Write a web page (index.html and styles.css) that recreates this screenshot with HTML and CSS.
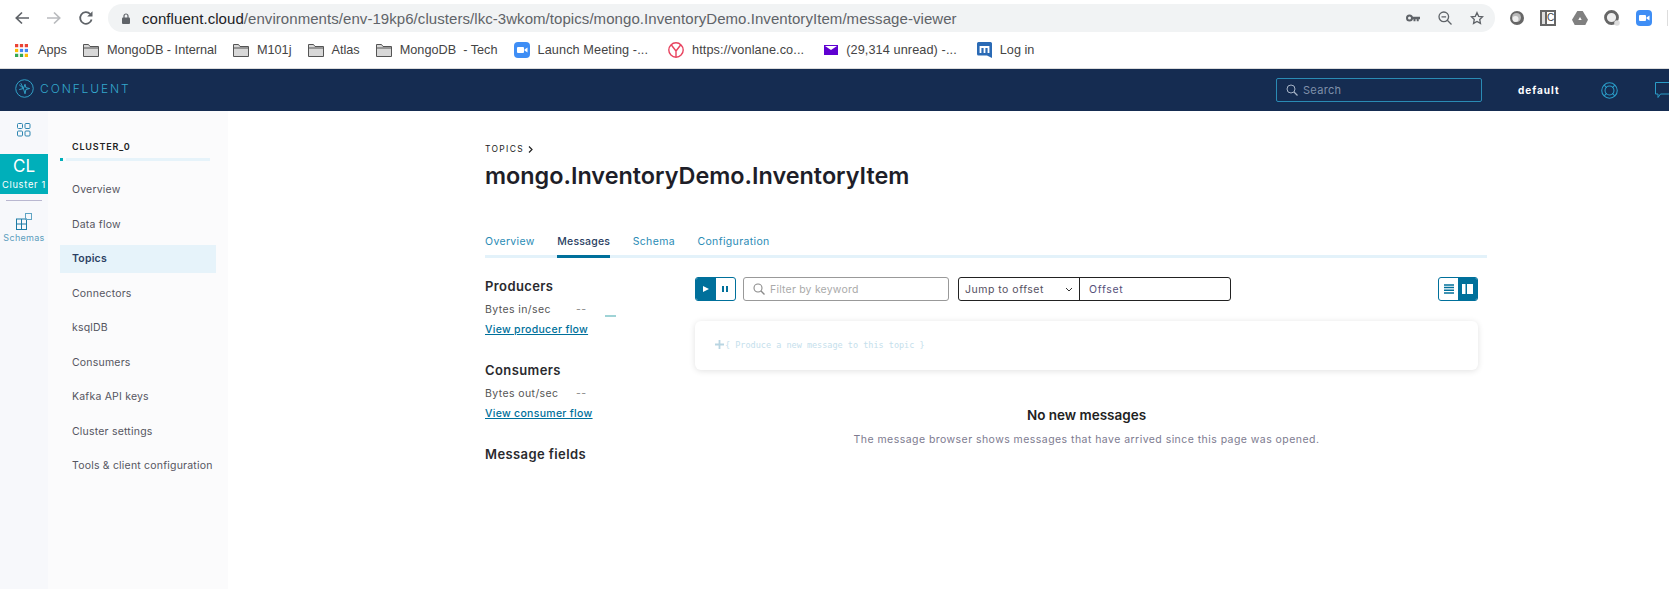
FILE: index.html
```html
<!DOCTYPE html>
<html lang="en">
<head>
  <meta charset="UTF-8" />
  <title>mongo.InventoryDemo.InventoryItem - Confluent</title>
  <link rel="stylesheet" href="styles.css">
</head>
<body>

  <!-- browser toolbar -->
  <div class="toolbar">
    <svg class="tool" width="16" height="16" viewBox="0 0 16 16"><path d="M15 8H2.500M8 2.500L2.300 8 8 13.500" fill="none" stroke="#5f6368" stroke-width="1.700"/></svg>
    <svg class="tool" width="16" height="16" viewBox="0 0 16 16"><path d="M1 8h12.500M8 2.500L13.700 8 8 13.500" fill="none" stroke="#b9bbbe" stroke-width="1.700"/></svg>
    <svg class="tool" width="16" height="16" viewBox="0 0 16 16"><path d="M13.600 9.500A5.800 5.800 0 1 1 12.200 4" fill="none" stroke="#5f6368" stroke-width="1.800"/><path d="M14.500 1.200v5.300H9.200z" fill="#5f6368"/></svg>
    <div class="urlbar">
      <svg class="lock" width="8" height="11" viewBox="0 0 8 11"><path d="M2 5V3a2 2 0 0 1 4 0v2" fill="none" stroke="#5f6368" stroke-width="1.200"/><rect y="4.500" width="8" height="6.500" rx="1" fill="#5f6368"/></svg>
      <div class="url"><b>confluent.cloud</b>/environments/env-19kp6/clusters/lkc-3wkom/topics/mongo.InventoryDemo.InventoryItem/message-viewer</div>
      <svg class="url-icon" width="14" height="9" viewBox="0 0 14 9"><circle cx="3.500" cy="4" r="2.500" fill="none" stroke="#5f6368" stroke-width="2"/><path d="M5.500 2.800H14v2.400h-1.300v2h-2v-2H9.500v2h-2v-2h-2z" fill="#5f6368"/></svg>
      <svg class="url-icon" width="14" height="14" viewBox="0 0 14 14"><circle cx="5.800" cy="5.800" r="4.800" fill="none" stroke="#5f6368" stroke-width="1.300"/><path d="M9.300 9.300L13.500 13.500M3.500 5.800h4.600" fill="none" stroke="#5f6368" stroke-width="1.300"/></svg>
      <svg class="url-icon" width="14" height="14" viewBox="0 0 15 14"><path d="M7.500 1.300l1.800 3.900 4.200.5-3.100 2.900.8 4.200-3.700-2.100-3.700 2.100.8-4.200L1.500 5.700l4.200-.5z" fill="none" stroke="#5f6368" stroke-width="1.400"/></svg>
    </div>
    <div class="extensions">
      <svg width="14" height="14" viewBox="0 0 14 14"><circle cx="7" cy="7" r="7" fill="#666"/><circle cx="6.500" cy="6.500" r="4.500" fill="#bbb"/><circle cx="5.500" cy="8" r="3" fill="#eee"/></svg>
      <div class="ext-box"><span class="ext-strip"></span><span class="ext-c">C</span></div>
      <svg width="16" height="14" viewBox="0 0 16 14"><path d="M5.300 0h5.400L16 8.800 13.300 14H2.700L0 8.800z" fill="#808080"/><path d="M8 6l1.700 3H6.300z" fill="#fff"/></svg>
      <svg width="16" height="16" viewBox="0 0 16 16"><circle cx="7.500" cy="7.500" r="6" fill="#eee" stroke="#666" stroke-width="2.800"/><circle cx="13" cy="13" r="2.800" fill="#ddd"/></svg>
      <svg width="16" height="16" viewBox="0 0 16 16"><rect width="16" height="16" rx="4" fill="#3f8ef5"/><rect x="3" y="5" width="7" height="6" rx="1" fill="#fff"/><path d="M10.500 7.500l3-2v5l-3-2z" fill="#fff"/></svg>
      <span class="ext-sep"></span>
    </div>
  </div>

  <!-- bookmarks -->
  <div class="bookmarks">
    <div class="bookmark">
      <svg class="apps-icon" width="13" height="13" viewBox="0 0 12 12">
        <rect width="3" height="3" fill="#ea4335"/><rect x="4.500" width="3" height="3" fill="#ea4335"/><rect x="9" width="3" height="3" fill="#ea4335"/>
        <rect y="4.500" width="3" height="3" fill="#fbbc05"/><rect x="4.500" y="4.500" width="3" height="3" fill="#4285f4"/><rect x="9" y="4.500" width="3" height="3" fill="#4285f4"/>
        <rect y="9" width="3" height="3" fill="#34a853"/><rect x="4.500" y="9" width="3" height="3" fill="#34a853"/><rect x="9" y="9" width="3" height="3" fill="#fbbc05"/>
      </svg>
      Apps
    </div>
    <div class="bookmark">
      <svg width="16" height="13" viewBox="0 0 16 13"><path d="M.5 12.500V.5h5l1.500 2h8.500v10z" fill="#d8d8d8" stroke="#555"/><path d="M.5 4h15" stroke="#555"/></svg>
      MongoDB - Internal
    </div>
    <div class="bookmark">
      <svg width="16" height="13" viewBox="0 0 16 13"><path d="M.5 12.500V.5h5l1.500 2h8.500v10z" fill="#d8d8d8" stroke="#555"/><path d="M.5 4h15" stroke="#555"/></svg>
      M101j
    </div>
    <div class="bookmark">
      <svg width="16" height="13" viewBox="0 0 16 13"><path d="M.5 12.500V.5h5l1.500 2h8.500v10z" fill="#d8d8d8" stroke="#555"/><path d="M.5 4h15" stroke="#555"/></svg>
      Atlas
    </div>
    <div class="bookmark">
      <svg width="16" height="13" viewBox="0 0 16 13"><path d="M.5 12.500V.5h5l1.500 2h8.500v10z" fill="#d8d8d8" stroke="#555"/><path d="M.5 4h15" stroke="#555"/></svg>
      MongoDB&nbsp; - Tech
    </div>
    <div class="bookmark trunc">
      <svg width="16" height="16" viewBox="0 0 16 16"><rect width="16" height="16" rx="4" fill="#3f8ef5"/><rect x="3" y="5" width="7" height="6" rx="1" fill="#fff"/><path d="M10.500 7.500l3-2v5l-3-2z" fill="#fff"/></svg>
      Launch Meeting -...
    </div>
    <div class="bookmark trunc">
      <svg width="16" height="16" viewBox="0 0 16 16"><circle cx="8" cy="8" r="7.200" fill="none" stroke="#e8435f" stroke-width="1.400"/><path d="M3.200 2.800L8 9l4.800-6.200M8 9v6" fill="none" stroke="#e8435f" stroke-width="1.400"/></svg>
      https://vonlane.co...
    </div>
    <div class="bookmark trunc">
      <svg width="14" height="10" viewBox="0 0 14 10"><rect width="14" height="10" fill="#5f01d1"/><path d="M1 1h12L7 5z" fill="#fff"/></svg>
      (29,314 unread) -...
    </div>
    <div class="bookmark">
      <svg width="15" height="16" viewBox="0 0 15 16"><path d="M1.500 0h12A1.500 1.500 0 0 1 15 1.500V16l-5-2.500H1.500A1.500 1.500 0 0 1 0 12V1.500A1.500 1.500 0 0 1 1.500 0z" fill="#2a6ab5"/><path d="M3.500 11V5h8v6M7.500 5v6" fill="none" stroke="#fff" stroke-width="1.800"/></svg>
      Log in
    </div>
  </div>

  <!-- confluent top nav -->
  <div class="topnav">
    <div class="logo">
      <svg width="19" height="19" viewBox="0 0 18 18"><circle cx="9" cy="9" r="8.300" fill="none" stroke="#33a7cc" stroke-width=".9"/><path d="M4 5.500l4 3.500-2.500-5M8 9L4 10M8 9l1.500 5 .8-4 3.500-1-3.500-.8L9.500 5z" fill="none" stroke="#33a7cc" stroke-width=".9"/></svg>
      CONFLUENT
    </div>
    <div class="nav-right">
      <div class="search">
        <svg width="12" height="12" viewBox="0 0 12 12"><circle cx="5" cy="5" r="4" fill="none" stroke="#a6b3c6" stroke-width="1"/><path d="M8 8l3.500 3.500" stroke="#a6b3c6" stroke-width="1.200"/></svg>
        Search
      </div>
      <div class="env">default</div>
      <svg class="help" width="17" height="17" viewBox="0 0 16 16"><circle cx="8" cy="8" r="7.300" fill="none" stroke="#2a9cc7"/><circle cx="8" cy="8" r="4.200" fill="none" stroke="#2a9cc7"/><path d="M3 3l2.500 2.500M13 3l-2.500 2.500M3 13l2.500-2.500M13 13l-2.500-2.500" stroke="#2a9cc7"/></svg>
      <svg class="chat" width="20" height="16" viewBox="0 0 20 16"><path d="M.5.500h19v11.500H5.500L3 15.500V12H.5z" fill="none" stroke="#2a9cc7"/></svg>
    </div>
  </div>

  <div class="app">
    <div class="rail">
      <svg class="rail-grid" width="14" height="14" viewBox="0 0 14 14" fill="none" stroke="#2f86b0"><rect x=".5" y=".5" width="5" height="5" rx="1"/><rect x="8" y=".5" width="5" height="5" rx="1"/><rect x=".5" y="8" width="5" height="5" rx="1"/><rect x="8" y="8" width="5" height="5" rx="1"/></svg>
      <div class="cluster-tile">
        <div class="cluster-short">CL</div>
        <div class="cluster-name">Cluster 1</div>
      </div>
      <div class="rail-sep"></div>
      <svg class="rail-schema" width="16" height="17" viewBox="0 0 16 17" fill="none" stroke="#1c7ba5"><rect x=".5" y="6" width="10" height="10.500"/><path d="M5.500 6v10.500M.5 11h10"/><rect x="9.500" y=".5" width="6" height="6" stroke="#5fa4c4"/></svg>
      <div class="rail-label">Schemas</div>
    </div>

    <div class="subnav">
      <div class="subnav-title">CLUSTER_0</div>
      <div class="subnav-rule"><span class="rule-dot"></span><span class="rule-line"></span></div>
      <ul class="subnav-list">
        <li>Overview</li>
        <li>Data flow</li>
        <li class="active">Topics</li>
        <li>Connectors</li>
        <li>ksqlDB</li>
        <li>Consumers</li>
        <li>Kafka API keys</li>
        <li>Cluster settings</li>
        <li>Tools &amp; client configuration</li>
      </ul>
    </div>

    <div class="content">
      <div class="crumb">TOPICS <span class="crumb-arrow">
        <svg width="5" height="7" viewBox="0 0 5 7"><path d="M1 .5l3 3-3 3" fill="none" stroke="#222" stroke-width="1.200"/></svg>
      </span></div>
      <h1>mongo.InventoryDemo.InventoryItem</h1>

      <div class="tabs">
        <div class="tab">Overview</div>
        <div class="tab selected">Messages</div>
        <div class="tab">Schema</div>
        <div class="tab">Configuration</div>
      </div>

      <div class="columns">
        <div class="stats">
          <h3>Producers</h3>
          <div class="stat"><span class="stat-label">Bytes in/sec</span><span class="stat-val">--</span><span class="spark"></span></div>
          <a class="flow">View producer flow</a>
          <h3>Consumers</h3>
          <div class="stat"><span class="stat-label">Bytes out/sec</span><span class="stat-val">--</span></div>
          <a class="flow">View consumer flow</a>
          <h3>Message fields</h3>
        </div>

        <div class="viewer">
          <div class="controls">
            <div class="playpause">
              <div class="pp-btn on"><svg width="8" height="8" viewBox="0 0 8 8"><path d="M1 1l6 3-6 3z" fill="#fff"/></svg></div>
              <div class="pp-btn"><svg width="8" height="8" viewBox="0 0 8 8"><path d="M1 1h2v6H1zM5 1h2v6H5z" fill="#00709b"/></svg></div>
            </div>
            <div class="filter">
              <svg width="12" height="12" viewBox="0 0 12 12"><circle cx="5" cy="5" r="4" fill="none" stroke="#8a8a8a" stroke-width="1.100"/><path d="M8 8l3.500 3.500" stroke="#8a8a8a" stroke-width="1.300"/></svg>
              Filter by keyword
            </div>
            <div class="jump">
              <div class="jump-select">Jump to offset
                <svg width="8" height="5" viewBox="0 0 8 5"><path d="M1 1l3 3 3-3" fill="none" stroke="#333"/></svg>
              </div>
              <div class="jump-input">Offset</div>
            </div>
            <div class="layout-toggle">
              <div class="lt-btn"><svg width="10" height="10" viewBox="0 0 10 10"><path d="M0 1h10M0 3.600h10M0 6.300h10M0 9h10" stroke="#00709b" stroke-width="1.500"/></svg></div>
              <div class="lt-btn on"><svg width="11" height="10" viewBox="0 0 11 10"><path d="M0 0h3.500v10H0zM5 0h6v10H5z" fill="#fff"/></svg></div>
            </div>
          </div>

          <div class="produce">
            <svg width="11" height="11" viewBox="0 0 11 11"><path d="M5.500 1v9M1 5.500h9" stroke="#b9d5e2" stroke-width="1.800"/></svg>
            <span>{ Produce a new message to this topic }</span>
          </div>

          <div class="empty">
            <div class="empty-title">No new messages</div>
            <div class="empty-text">The message browser shows messages that have arrived since this page was opened.</div>
          </div>
        </div>
      </div>
    </div>
  </div>

</body>
</html>
```

FILE: styles.css
```css
* {
  box-sizing: border-box;
}

html, body {
  margin: 0;
  height: 589px;
  overflow: hidden;
  background-color: white;
}

body {
  font-family: 'Inter', sans-serif;
  color: #222;
}

svg {
  flex: none;
  display: block;
}

/* browser chrome */
.toolbar {
  display: flex;
  align-items: center;
  height: 36px;
  padding: 4px 0 4px 14px;
}

.tool {
  margin-right: 16px;
}

.urlbar {
  display: flex;
  align-items: center;
  flex: none;
  width: 1387px;
  height: 28px;
  margin-left: -2px;
  padding: 0 11px 0 14px;
  border-radius: 14px;
  background-color: #f1f3f4;
}

.lock {
  margin-right: 12px;
}

.url {
  flex: 1;
  font-family: 'Liberation Sans', sans-serif;
  font-size: 15px;
  letter-spacing: .06px;
  white-space: nowrap;
  color: #5f6368;
}

.url b {
  font-weight: normal;
  color: #202124;
}

.url-icon {
  margin-left: 18px;
}

.extensions {
  display: flex;
  align-items: center;
  gap: 16px;
  margin-left: 15px;
}

.ext-box {
  display: flex;
  align-items: center;
  gap: 2px;
  width: 16px;
  height: 16px;
  padding: 2px;
  background-color: #666;
}

.ext-strip {
  width: 3px;
  height: 12px;
  background-color: #ddd;
}

.ext-c {
  width: 7px;
  height: 12px;
  background-color: white;
  color: #444;
  font-family: 'Liberation Sans', sans-serif;
  font-size: 10px;
  line-height: 12px;
  text-align: center;
}

.ext-sep {
  width: 1px;
  height: 16px;
  margin-left: -1px;
  background-color: #ddd;
}

.bookmarks {
  display: flex;
  align-items: center;
  gap: 16px;
  height: 33px;
  padding: 0 0 4px 15px;
  border-bottom: 1px solid #dcdcdc;
  font-family: 'Liberation Sans', sans-serif;
  font-size: 12.700px;
  color: #444;
}

.bookmark {
  display: flex;
  align-items: center;
  gap: 8px;
  white-space: nowrap;
}

.bookmark.trunc {
  margin-right: 4px;
  letter-spacing: .1px;
}

.apps-icon {
  margin-right: 2px;
}

/* confluent app */
.topnav {
  display: flex;
  align-items: center;
  justify-content: space-between;
  height: 42px;
  padding-left: 15px;
  background-color: #152c51;
}

.logo {
  display: flex;
  align-items: center;
  gap: 6px;
  margin-top: -4px;
  font-size: 12px;
  font-weight: 300;
  letter-spacing: 1.900px;
  color: #33a7cc;
}

.nav-right {
  display: flex;
  align-items: center;
  width: 393px;
  flex: none;
}

.search {
  display: flex;
  align-items: center;
  flex: none;
  gap: 5px;
  width: 206px;
  height: 24px;
  padding-left: 9px;
  border: 1px solid #2a8bb5;
  border-radius: 2px;
  font-size: 11px;
  letter-spacing: .3px;
  color: #7f90a9;
}

.env {
  margin-left: 36px;
  font-size: 10px;
  font-weight: 700;
  letter-spacing: 1px;
  color: white;
}

.help {
  margin-left: 41px;
}

.chat {
  margin-left: 37px;
}

.app {
  display: flex;
  height: 478px;
}

.rail {
  display: flex;
  flex-direction: column;
  align-items: center;
  width: 48px;
  flex: none;
  padding-top: 12px;
  background-color: #f7f8fb;
}

.cluster-tile {
  width: 48px;
  height: 40px;
  margin-top: 17px;
  background-color: #00afba;
  color: white;
  text-align: center;
}

.cluster-short {
  font-size: 17px;
  line-height: 25px;
}

.cluster-name {
  font-size: 9.300px;
  line-height: 12px;
  letter-spacing: .7px;
}

.rail-sep {
  width: 36px;
  height: 1px;
  margin-top: 6px;
  background-color: #b9b7d0;
}

.rail-schema {
  margin-top: 12px;
}

.rail-label {
  margin-top: 2px;
  font-size: 9px;
  letter-spacing: .3px;
  color: #5b9dbd;
}

.subnav {
  width: 180px;
  flex: none;
  padding-top: 29px;
  background-color: #fbfbfc;
}

.subnav-title {
  padding-left: 24px;
  font-size: 9px;
  font-weight: 600;
  line-height: 14px;
  letter-spacing: .8px;
}

.subnav-rule {
  display: flex;
  align-items: center;
  gap: 3px;
  margin: 4px 0 0 12px;
}

.rule-dot {
  width: 3px;
  height: 3px;
  background-color: #00afba;
}

.rule-line {
  width: 144px;
  height: 3px;
  background-color: #e6f3fa;
}

.subnav-list {
  margin: 15px 0 0 12px;
  padding: 0;
  list-style: none;
}

.subnav-list li {
  width: 156px;
  height: 28px;
  margin-bottom: 6.500px;
  padding-left: 12px;
  font-size: 10.500px;
  line-height: 28px;
  letter-spacing: .2px;
  white-space: nowrap;
  color: #55555f;
}

.subnav-list li.active {
  background-color: #e6f3fa;
  font-weight: 600;
  color: #2b3f63;
}

.content {
  width: 1002px;
  flex: none;
  margin-left: 257px;
  padding-top: 32px;
}

.crumb {
  display: flex;
  align-items: center;
  gap: 4px;
  height: 12px;
  font-size: 8.500px;
  letter-spacing: 1.300px;
  color: #222;
}

h1 {
  margin: 6px 0 0;
  font-size: 23.400px;
  font-weight: 600;
  line-height: 30px;
  color: #1e1e28;
}

.tabs {
  display: flex;
  gap: 22.500px;
  height: 37px;
  margin-top: 30px;
  padding-top: 13px;
  border-bottom: 3px solid #e3f2fa;
  font-size: 10.500px;
  letter-spacing: .35px;
  color: #2a8bb5;
}

.tab {
  height: 24px;
  line-height: 16px;
}

.tab.selected {
  border-bottom: 3px solid #00709b;
  color: #2b3f63;
  font-weight: 500;
  letter-spacing: .2px;
}

.columns {
  display: flex;
  padding-top: 19px;
}

.stats {
  width: 210px;
  flex: none;
  margin-top: -1px;
}

.stats h3 {
  margin: 0;
  font-size: 13px;
  font-weight: 600;
  line-height: 20px;
  letter-spacing: .4px;
  color: #2a2a2e;
}

.stat {
  display: flex;
  align-items: center;
  height: 16px;
  margin-top: 5px;
  font-size: 10.500px;
  letter-spacing: .4px;
  color: #555;
}

.stat-label {
  width: 91px;
}

.stat-val {
  width: 29px;
  color: #888;
}

.spark {
  align-self: flex-end;
  width: 11px;
  height: 2px;
  background-color: #9fd3d6;
}

.flow {
  display: block;
  height: 16px;
  margin: 5px 0 22px;
  font-size: 10.500px;
  font-weight: 500;
  line-height: 16px;
  letter-spacing: .3px;
  text-decoration: underline;
  color: #00709b;
}

.viewer {
  width: 783px;
  flex: none;
}

.controls {
  display: flex;
  align-items: center;
  height: 24px;
}

.playpause {
  display: flex;
  width: 41px;
  height: 24px;
  border: 1px solid #00709b;
  border-radius: 3px;
  overflow: hidden;
}

.pp-btn, .lt-btn {
  display: flex;
  flex: 1;
  align-items: center;
  justify-content: center;
}

.pp-btn.on, .lt-btn.on {
  background-color: #00709b;
}

.filter {
  display: flex;
  align-items: center;
  gap: 5px;
  width: 206px;
  height: 24px;
  margin-left: 7px;
  padding-left: 9px;
  border: 1px solid #999;
  border-radius: 3px;
  font-size: 10.500px;
  letter-spacing: .2px;
  color: #aaa;
}

.jump {
  display: flex;
  width: 273px;
  height: 24px;
  margin-left: 9px;
  border: 1px solid #222;
  border-radius: 3px;
  font-size: 10.500px;
  letter-spacing: .5px;
  color: #55505f;
}

.jump-select {
  display: flex;
  align-items: center;
  justify-content: space-between;
  width: 121px;
  padding: 0 6px 0 6px;
  border-right: 1px solid #222;
}

.jump-input {
  padding: 1px 0 0 9px;
  line-height: 22px;
  letter-spacing: .7px;
  color: #55507a;
}

.layout-toggle {
  display: flex;
  width: 40px;
  height: 24px;
  margin-left: auto;
  border: 1px solid #00709b;
  border-radius: 3px;
  overflow: hidden;
}

.produce {
  display: flex;
  align-items: center;
  height: 49px;
  margin-top: 20px;
  padding: 0 0 2px 19px;
  border-radius: 6px;
  box-shadow: 0 1px 6px rgba(0, 0, 0, .12);
  font-family: 'DejaVu Sans Mono', monospace;
  font-size: 8.500px;
  color: #c5e0ec;
}

.empty {
  padding-top: 36px;
  text-align: center;
}

.empty-title {
  font-size: 13.500px;
  font-weight: 600;
  line-height: 18px;
  color: #222;
}

.empty-text {
  margin-top: 8px;
  font-size: 10.500px;
  line-height: 16px;
  letter-spacing: .45px;
  color: #7d7b90;
}
```
